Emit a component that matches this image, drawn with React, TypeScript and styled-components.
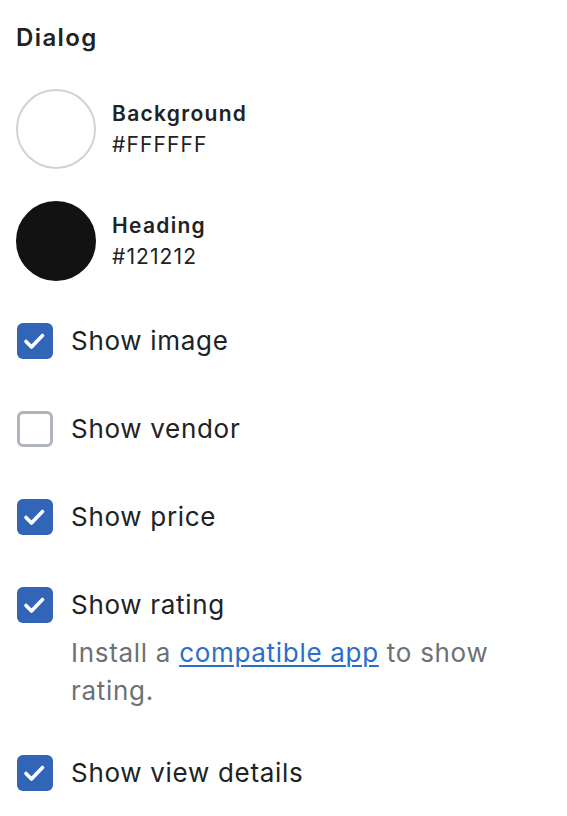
import React, { useState } from 'react'
import styled, { createGlobalStyle } from 'styled-components'

const GlobalStyle = createGlobalStyle`
  html, body {
    margin: 0;
    padding: 0;
    background: #fff;
  }
  body {
    font-family: Inter, "Noto Sans", "Liberation Sans", sans-serif;
    color: #202223;
    -webkit-font-smoothing: antialiased;
  }
`

type Swatch = { label: string; hex: string }

const swatches: Swatch[] = [
  { label: 'Background', hex: '#FFFFFF' },
  { label: 'Heading', hex: '#121212' },
]

type Option = { id: string; label: string; checked: boolean; help?: boolean }

const initialOptions: Option[] = [
  { id: 'image', label: 'Show image', checked: true },
  { id: 'vendor', label: 'Show vendor', checked: false },
  { id: 'price', label: 'Show price', checked: true },
  { id: 'rating', label: 'Show rating', checked: true, help: true },
  { id: 'details', label: 'Show view details', checked: true },
]

const App = () => {
  const [options, setOptions] = useState(initialOptions)

  const toggle = (id: string) =>
    setOptions((prev) =>
      prev.map((o) => (o.id === id ? { ...o, checked: !o.checked } : o))
    )

  return (
    <>
      <GlobalStyle />
      <Painel>
        <Titulo>Dialog</Titulo>
        <ListaCores>
          {swatches.map((s) => (
            <LinhaCor key={s.label}>
              <Circulo $cor={s.hex} />
              <InfoCor>
                <NomeCor>{s.label}</NomeCor>
                <Hex>{s.hex}</Hex>
              </InfoCor>
            </LinhaCor>
          ))}
        </ListaCores>
        <ListaOpcoes>
          {options.map((o) => (
            <Opcao key={o.id}>
              <LinhaCheck onClick={() => toggle(o.id)}>
                <Caixa $marcado={o.checked}>
                  {o.checked && (
                    <svg width="36" height="36" viewBox="0 0 36 36">
                      <path
                        d="M9 18.5 L14.5 24 L25.5 12.5"
                        fill="none"
                        stroke="#fff"
                        strokeWidth="3.6"
                        strokeLinecap="round"
                        strokeLinejoin="round"
                      />
                    </svg>
                  )}
                </Caixa>
                <Rotulo>{o.label}</Rotulo>
              </LinhaCheck>
              {o.help && (
                <Ajuda>
                  Install a <Link href="#">compatible app</Link> to show
                  rating.
                </Ajuda>
              )}
            </Opcao>
          ))}
        </ListaOpcoes>
      </Painel>
    </>
  )
}

const Painel = styled.div`
  padding: 22px 16px 30px 16px;
  width: 567px;
  box-sizing: border-box;
`

const Titulo = styled.h2`
  margin: 0;
  font-size: 24px;
  line-height: 32px;
  font-weight: 600;
  letter-spacing: 1.4px;
  color: #202223;
`

const ListaCores = styled.div`
  display: flex;
  flex-direction: column;
  gap: 32px;
  margin-top: 35px;
`

const LinhaCor = styled.div`
  display: flex;
  align-items: center;
  gap: 16px;
`

const Circulo = styled.div<{ $cor: string }>`
  width: 80px;
  height: 80px;
  border-radius: 50%;
  box-sizing: border-box;
  background: ${(p) => p.$cor};
  border: 2px solid ${(p) => (p.$cor === '#FFFFFF' ? '#d2d2d2' : p.$cor)};
  flex-shrink: 0;
`

const InfoCor = styled.div`
  display: flex;
  flex-direction: column;
`

const NomeCor = styled.span`
  font-size: 21px;
  line-height: 31px;
  font-weight: 600;
  letter-spacing: 1.3px;
  color: #202223;
`

const Hex = styled.span`
  font-size: 21px;
  line-height: 31px;
  font-weight: 400;
  letter-spacing: 1.1px;
  color: #202223;
`

const ListaOpcoes = styled.div`
  display: flex;
  flex-direction: column;
  gap: 50px;
  margin-top: 41px;
`

const Opcao = styled.div`
  display: flex;
  flex-direction: column;
`

const LinhaCheck = styled.label`
  display: flex;
  align-items: center;
  gap: 18px;
  cursor: pointer;
  padding-left: 1px;
`

const Caixa = styled.span<{ $marcado: boolean }>`
  width: 36px;
  height: 36px;
  box-sizing: border-box;
  border-radius: 6px;
  flex-shrink: 0;
  display: flex;
  align-items: center;
  justify-content: center;
  background: ${(p) => (p.$marcado ? '#3264b8' : '#fff')};
  border: ${(p) => (p.$marcado ? 'none' : '3px solid #b0b5bb')};

  svg {
    display: block;
  }
`

const Rotulo = styled.span`
  font-size: 26px;
  line-height: 38px;
  letter-spacing: 0.7px;
  color: #202223;
`

const Ajuda = styled.p`
  margin: 10px 0 -6px 55px;
  font-size: 26px;
  line-height: 38px;
  letter-spacing: 0.7px;
  color: #6d7175;
  max-width: 440px;
`

const Link = styled.a`
  color: #2c6ecb;
  text-decoration: underline;
  text-underline-offset: 3px;
  text-decoration-thickness: 2px;
`

export default App
